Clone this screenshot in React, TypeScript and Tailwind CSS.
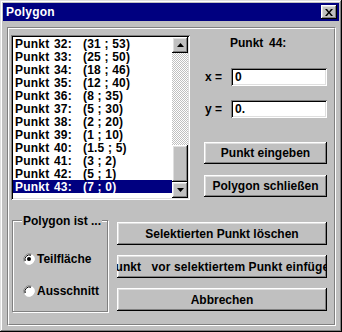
const points: [number, string][] = [
  [32, '(31 ; 53)'],
  [33, '(25 ; 50)'],
  [34, '(18 ; 46)'],
  [35, '(12 ; 40)'],
  [36, '(8 ; 35)'],
  [37, '(5 ; 30)'],
  [38, '(2 ; 20)'],
  [39, '(1 ; 10)'],
  [40, '(1.5 ; 5)'],
  [41, '(3 ; 2)'],
  [42, '(5 ; 1)'],
  [43, '(7 ; 0)'],
];

const raised =
  'shadow-[inset_-1px_-1px_#000,inset_1px_1px_#fff,inset_-2px_-2px_#808080,inset_2px_2px_#dfdfdf]';
const sunken =
  'shadow-[inset_1px_1px_#808080,inset_-1px_-1px_#fff,inset_2px_2px_#000,inset_-2px_-2px_#dfdfdf]';

const Arrow = ({ up }: { up?: boolean }) => (
  <div className={`flex h-[16px] w-[16px] items-center justify-center bg-[#c0c0c0] ${raised}`}>
    <svg width="7" height="4" viewBox="0 0 7 4">
      {up ? <path d="M3.5 0 L7 4 L0 4 Z" fill="#000" /> : <path d="M0 0 L7 0 L3.5 4 Z" fill="#000" />}
    </svg>
  </div>
);

const Button = ({ label, className = '' }: { label: string; className?: string }) => (
  <div
    className={`flex items-center justify-center overflow-hidden whitespace-pre bg-[#c0c0c0] text-[12px] font-bold text-black ${raised} ${className}`}
  >
    {label}
  </div>
);

const Radio = ({ checked, label }: { checked?: boolean; label: string }) => (
  <div className="flex h-[14px] items-center">
    <svg width="12" height="12" viewBox="0 0 12 12" className="ml-[10px]">
      <circle cx="6" cy="6" r="5.5" fill="#fff" />
      <path d="M1.2 8.5 A5.5 5.5 0 0 1 8.5 1.2" stroke="#808080" strokeWidth="1" fill="none" />
      <path d="M2.2 8 A4.5 4.5 0 0 1 8 2.2" stroke="#000" strokeWidth="1" fill="none" />
      <path d="M10.8 3.5 A5.5 5.5 0 0 1 3.5 10.8" stroke="#fff" strokeWidth="1" fill="none" />
      {checked && <circle cx="6" cy="6" r="2" fill="#000" />}
    </svg>
    <span className="ml-[2px] text-[12px] font-bold text-black">{label}</span>
  </div>
);

export default function App() {
  return (
    <div
      className={`flex h-[332px] w-[342px] flex-col bg-[#c0c0c0] p-[3px] font-['Liberation_Sans',Arial,sans-serif] shadow-[inset_-1px_-1px_#000,inset_1px_1px_#dfdfdf,inset_-2px_-2px_#808080,inset_2px_2px_#fff]`}
    >
      {/* title bar */}
      <div className="flex h-[18px] items-center justify-between bg-[#000080] pl-[3px] pr-[2px]">
        <span className="text-[12px] font-bold tracking-[0.2px] text-white">Polygon</span>
        <div className={`flex h-[14px] w-[16px] items-center justify-center bg-[#c0c0c0] ${raised}`}>
          <svg width="8" height="7" viewBox="0 0 8 7">
            <path d="M0 0 L2 0 L4 2.5 L6 0 L8 0 L5 3.5 L8 7 L6 7 L4 4.5 L2 7 L0 7 L3 3.5 Z" fill="#000" />
          </svg>
        </div>
      </div>

      <div className="flex-1 pb-[3px] pl-[4px] pr-[3px] pt-[6px]">
        <div className="h-full border border-b-white border-l-[#808080] border-r-white border-t-[#808080]">
          <div className="h-full border border-b-[#808080] border-l-white border-r-[#808080] border-t-white">
            {/* top row */}
            <div className="ml-[2px] mt-[6px] flex">
              <div className={`flex h-[165px] w-[179px] bg-white p-[2px] ${sunken}`}>
                <div className="flex-1">
                  {points.map(([n, c]) => {
                    const sel = n === 43;
                    return (
                      <div
                        key={n}
                        className={`flex h-[13px] items-center pl-[2px] text-[12px] font-bold tracking-[0.2px] ${sel ? 'bg-[#000080] text-white' : 'text-black'}`}
                      >
                        <span className="w-[39px]">Punkt</span>
                        <span className="w-[29px]">{n}:</span>
                        <span>{c}</span>
                      </div>
                    );
                  })}
                </div>
                <div className="flex w-[16px] flex-col">
                  <Arrow up />
                  <div className="flex-1 bg-[repeating-conic-gradient(#c0c0c0_0_25%,#fff_0_50%)] bg-[length:2px_2px]" />
                  <div className={`h-[37px] bg-[#c0c0c0] ${raised}`} />
                  <Arrow />
                </div>
              </div>

              <div className="ml-[14px] flex w-[123px] flex-col">
                <div className="flex h-[16px] items-center pl-[26px] text-[12px] font-bold text-black">
                  <span className="w-[39px]">Punkt</span>
                  <span>44:</span>
                </div>
                <div className="mt-[17px] flex items-center">
                  <span className="w-[27px] pl-[1px] text-[12px] font-bold text-black">x =</span>
                  <div className={`flex h-[18px] w-[96px] items-center bg-white pl-[4px] text-[12px] font-bold text-black ${sunken}`}>
                    0
                  </div>
                </div>
                <div className="mt-[14px] flex items-center">
                  <span className="w-[27px] pl-[1px] text-[12px] font-bold text-black">y =</span>
                  <div className={`flex h-[18px] w-[96px] items-center bg-white pl-[4px] text-[12px] font-bold text-black ${sunken}`}>
                    0.
                  </div>
                </div>
                <Button label="Punkt eingeben" className="mt-[24px] h-[22px]" />
                <Button label="Polygon schließen" className="mt-[11px] h-[22px]" />
              </div>
            </div>

            {/* bottom row */}
            <div className="ml-[3px] mt-[14px] flex items-start">
              <div className="relative mt-[6px] h-[92px] w-[96px] border border-[#808080] shadow-[1px_1px_0_#fff,inset_1px_1px_0_#fff]">
                <span className="absolute left-[9px] top-[-7px] bg-[#c0c0c0] px-[1px] text-[12px] font-bold leading-[14px] text-black">
                  Polygon ist ...
                </span>
                <div className="mt-[31px] flex flex-col gap-[18px]">
                  <Radio checked label="Teilfläche" />
                  <Radio label="Ausschnitt" />
                </div>
              </div>
              <div className="ml-[9px] mt-[8px] flex w-[210px] flex-col gap-[10px]">
                <Button label="Selektierten Punkt löschen" className="h-[23px]" />
                <Button label="Punkt   vor selektiertem Punkt einfügen" className="h-[23px] tracking-[0.1px]" />
                <Button label="Abbrechen" className="h-[23px]" />
              </div>
            </div>
          </div>
        </div>
      </div>
    </div>
  );
}
